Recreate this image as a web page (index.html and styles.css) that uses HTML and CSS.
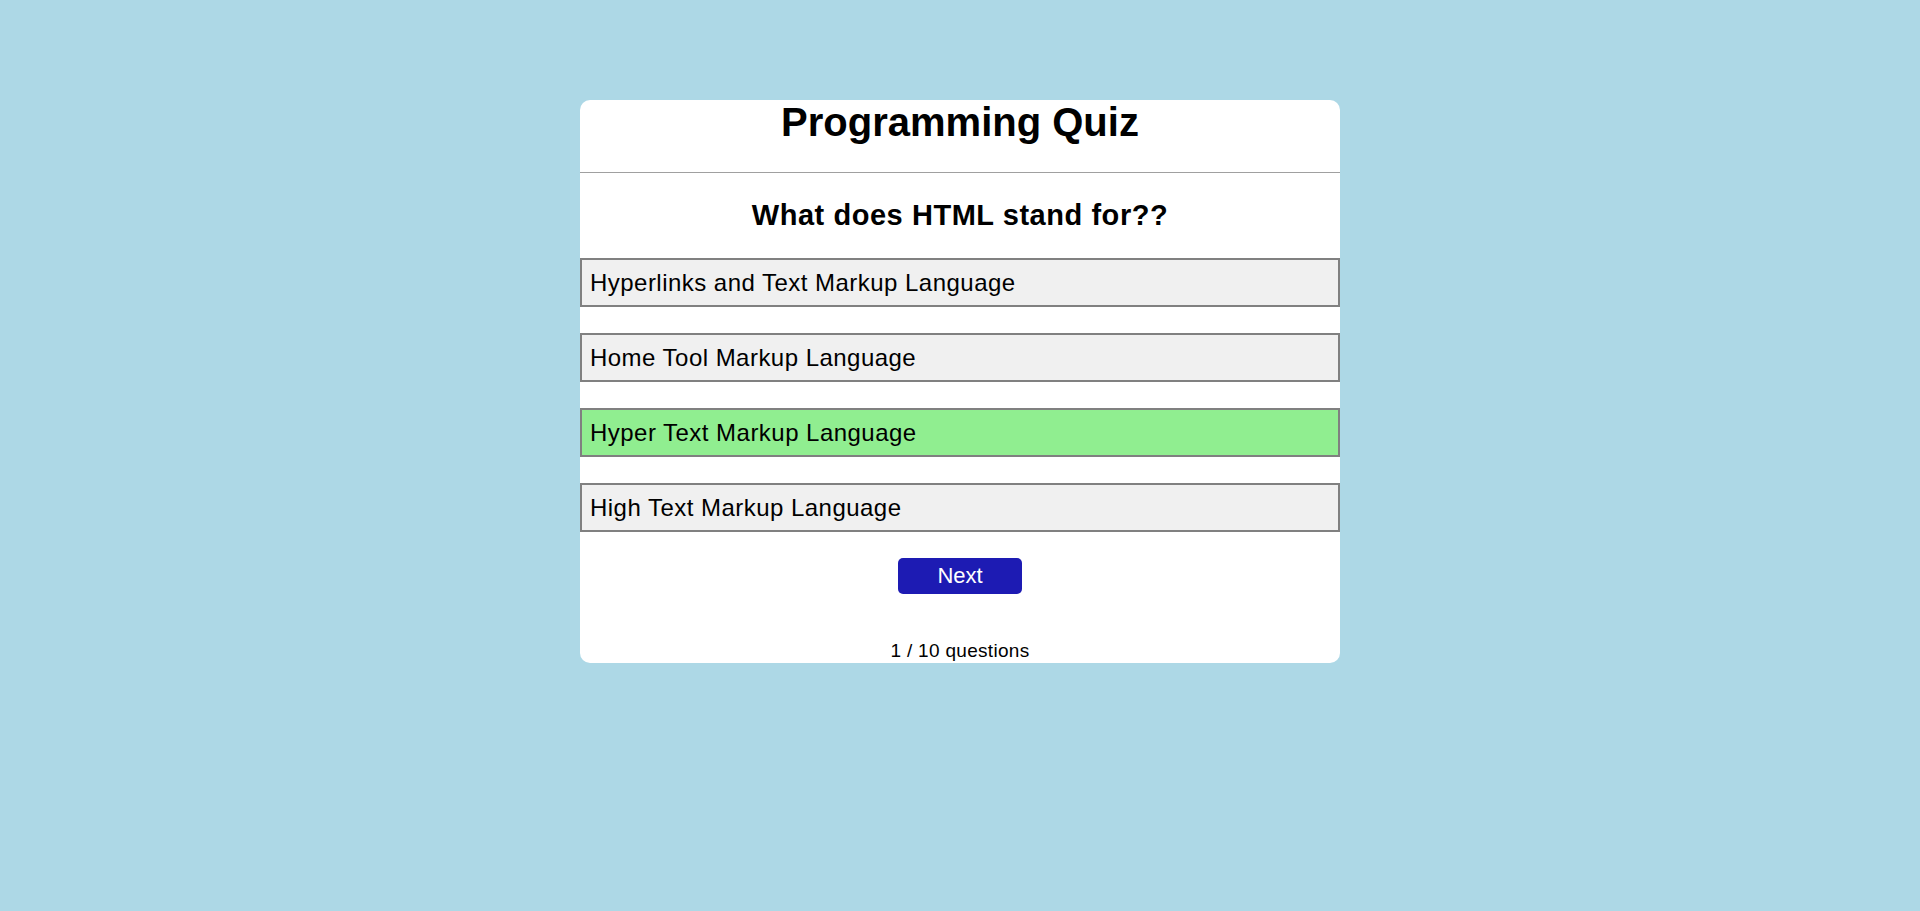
FILE: index.html
```html
<!DOCTYPE html>
<html lang="en">
<head>
<meta charset="utf-8">
<title>Programming Quiz</title>
<link rel="stylesheet" href="styles.css">
</head>
<body>
  <main class="quiz">
    <header class="quiz-header">
      <h1 class="quiz-title">Programming Quiz</h1>
    </header>
    <section class="quiz-body">
      <h2 class="question">What does HTML stand for??</h2>
      <div class="options">
        <button class="option">Hyperlinks and Text Markup Language</button>
        <button class="option">Home Tool Markup Language</button>
        <button class="option option-correct">Hyper Text Markup Language</button>
        <button class="option">High Text Markup Language</button>
      </div>
      <div class="actions">
        <button class="next-btn">Next</button>
      </div>
      <p class="progress">1 / 10 questions</p>
    </section>
  </main>
</body>
</html>
```

FILE: styles.css
```css
html, body {
  margin: 0;
  padding: 0;
}

body {
  background: #add8e6;
  font-family: "Liberation Sans", Arial, sans-serif;
  color: #000;
  min-height: 911px;
}

.quiz {
  width: 760px;
  margin: 100px auto 0;
  background: #fff;
  border-radius: 10px;
  overflow: hidden;
}

.quiz-header {
  border-bottom: 1px solid #a0a0a0;
  padding-bottom: 26px;
  text-align: center;
}

.quiz-title {
  margin: 0;
  font-size: 40px;
  line-height: 45px;
  padding-bottom: 1px;
  font-weight: bold;
}

.quiz-body {
  display: flex;
  flex-direction: column;
}

.question {
  margin: 26px 0 26px;
  text-align: center;
  font-size: 29px;
  line-height: 33px;
  font-weight: bold;
  letter-spacing: 0.55px;
}

.options {
  display: flex;
  flex-direction: column;
  gap: 26px;
}

.option {
  display: block;
  width: 100%;
  margin: 0;
  padding: 9px 8px;
  border: 2px solid #808080;
  background: #f0f0f0;
  text-align: left;
  font-family: "Liberation Sans", Arial, sans-serif;
  font-size: 24px;
  line-height: 27px;
  letter-spacing: 0.47px;
  color: #000;
  cursor: pointer;
}

.option-correct {
  background: #90ee90;
}

.actions {
  display: flex;
  justify-content: center;
  margin-top: 26px;
}

.next-btn {
  width: 124px;
  height: 36px;
  padding: 0;
  border: none;
  border-radius: 5px;
  background: #1d1bb3;
  color: #fff;
  font-family: "Liberation Sans", Arial, sans-serif;
  font-size: 22px;
  line-height: 36px;
  cursor: pointer;
}

.progress {
  margin: 45px 0 0;
  text-align: center;
  font-size: 19px;
  line-height: 24px;
  letter-spacing: 0.3px;
}
```
